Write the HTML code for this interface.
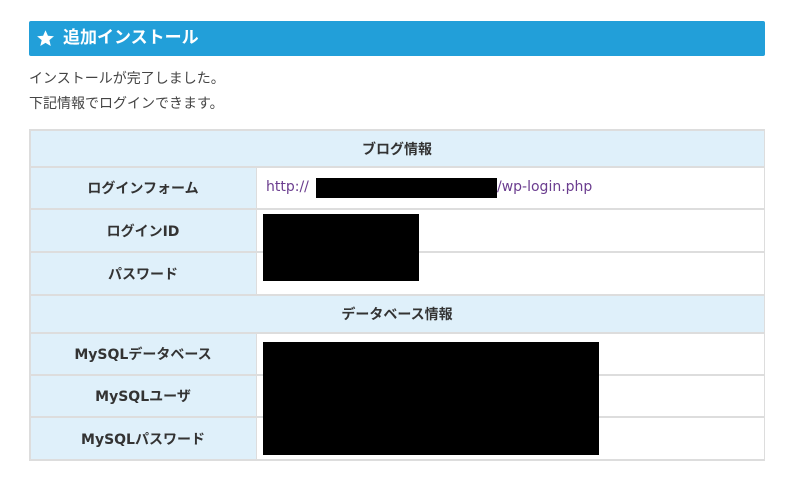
<!DOCTYPE html>
<html><head><meta charset="utf-8"><style>
body{margin:0;background:#fff;font-family:"DejaVu Sans","Noto Sans CJK JP",sans-serif;color:#333;width:800px;height:502px;position:relative;overflow:hidden}
.a{position:absolute}
.hd{left:29px;top:21px;width:736px;height:35px;background:#229fd9;border-radius:2px;color:#fff;font-weight:bold;font-size:17px;line-height:35px}
.t{font-size:14px;color:#444}
.bg{background:#dff0fa}
.cell{position:absolute;display:flex;align-items:center;justify-content:center;font-size:14px;font-weight:bold;color:#333}
.ln{position:absolute;background:#ddd}
.blk{position:absolute;background:#000}
</style></head><body>
<div class="a hd"><svg class="a" style="left:7px;top:8px" width="19" height="19" viewBox="0 0 24 24"><path fill="#fff" d="M12 1.5l3.1 7 7.6.6-5.8 5 1.8 7.4L12 17.6l-6.6 3.9 1.8-7.4-5.8-5 7.6-.6z"/></svg><span class="a" style="left:34px">追加インストール</span></div>
<div class="a t" style="left:29px;top:68px">インストールが完了しました。</div>
<div class="a t" style="left:29px;top:93px">下記情報でログインできます。</div>

<div class="a" style="left:29px;top:129px;width:736px;height:331px;background:#fff"></div>
<div class="a bg" style="left:29px;top:129px;width:736px;height:38px"></div>
<div class="a bg" style="left:29px;top:295px;width:736px;height:38px"></div>
<div class="a bg" style="left:29px;top:167px;width:228px;height:128px"></div>
<div class="a bg" style="left:29px;top:333px;width:228px;height:127px"></div>

<div class="ln" style="left:29px;top:129px;width:736px;height:2px"></div>
<div class="ln" style="left:29px;top:166px;width:736px;height:2px"></div>
<div class="ln" style="left:29px;top:208px;width:736px;height:2px"></div>
<div class="ln" style="left:29px;top:251px;width:736px;height:2px"></div>
<div class="ln" style="left:29px;top:294px;width:736px;height:2px"></div>
<div class="ln" style="left:29px;top:332px;width:736px;height:2px"></div>
<div class="ln" style="left:29px;top:374px;width:736px;height:2px"></div>
<div class="ln" style="left:29px;top:416px;width:736px;height:2px"></div>
<div class="ln" style="left:29px;top:459px;width:736px;height:2px"></div>
<div class="ln" style="left:29px;top:129px;width:2px;height:332px"></div>
<div class="ln" style="left:764px;top:129px;width:1px;height:332px"></div>
<div class="ln" style="left:256px;top:167px;width:1px;height:128px"></div>
<div class="ln" style="left:256px;top:333px;width:1px;height:127px"></div>

<div class="cell" style="left:29px;top:131px;width:736px;height:35px">ブログ情報</div>
<div class="cell" style="left:29px;top:168px;width:228px;height:40px">ログインフォーム</div>
<div class="cell" style="left:29px;top:210px;width:228px;height:41px">ログインID</div>
<div class="cell" style="left:29px;top:253px;width:228px;height:41px">パスワード</div>
<div class="cell" style="left:29px;top:296px;width:736px;height:36px">データベース情報</div>
<div class="cell" style="left:29px;top:334px;width:228px;height:40px">MySQLデータベース</div>
<div class="cell" style="left:29px;top:376px;width:228px;height:40px">MySQLユーザ</div>
<div class="cell" style="left:29px;top:418px;width:228px;height:41px">MySQLパスワード</div>

<div class="a" style="left:266px;top:179px;font-size:14px;color:#6b3d8f">http://</div>
<div class="blk" style="left:316px;top:178px;width:181px;height:20px"></div>
<div class="a" style="left:497px;top:179px;font-size:14px;color:#6b3d8f">/wp-login.php</div>
<div class="blk" style="left:263px;top:214px;width:156px;height:67px"></div>
<div class="blk" style="left:263px;top:342px;width:336px;height:113px"></div>
</body></html>
